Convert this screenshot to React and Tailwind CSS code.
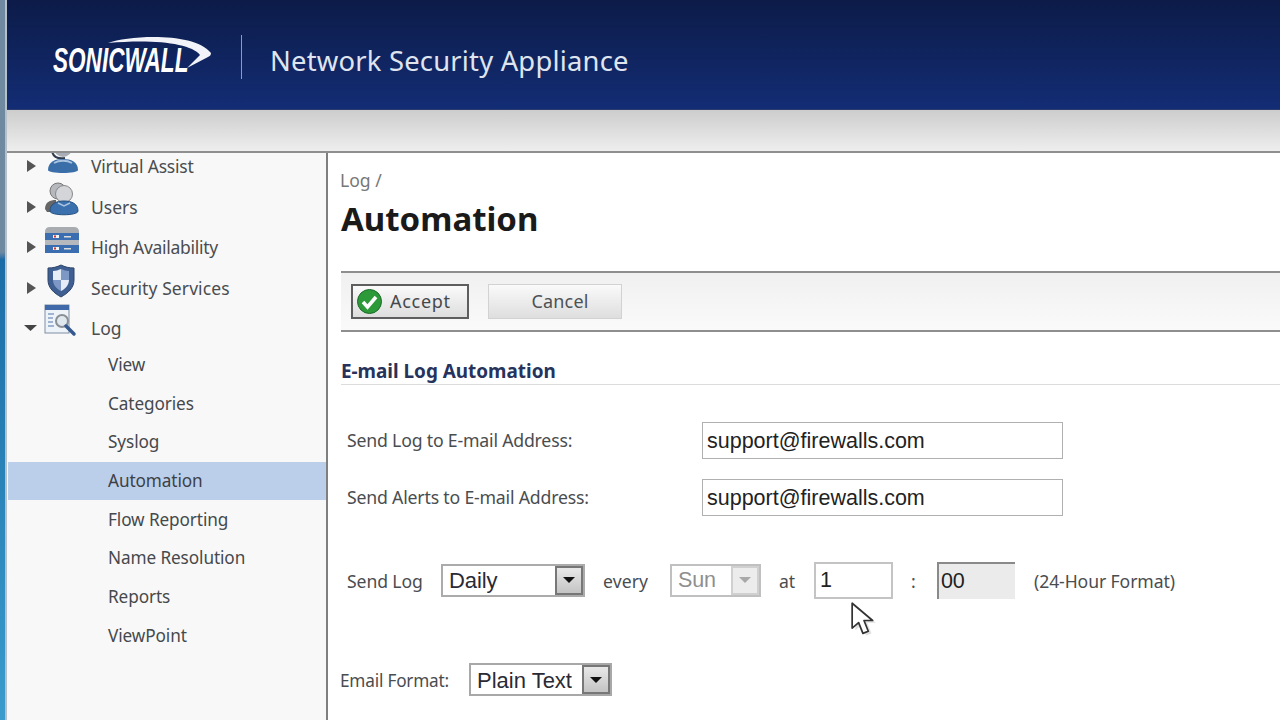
import React from "react";

const F = { fontFamily: '"Noto Sans", "DejaVu Sans", sans-serif' };
const A = { fontFamily: '"Liberation Sans", Arial, sans-serif' };

function Tri({ open }) {
  return (
    <svg width="14" height="14" viewBox="0 0 14 14" className="shrink-0">
      {open ? <path d="M0 4h13L6.5 10z" fill="#444" /> : <path d="M3 1l9 6-9 6z" fill="#555" />}
    </svg>
  );
}

function VA() {
  return (
    <svg width="36" height="32" viewBox="0 0 36 32">
      <circle cx="17" cy="5" r="9" fill="#a9aeb6" />
      <path d="M6 8c1 6 6 8 13 7" stroke="#2f3a4a" strokeWidth="2" fill="none" />
      <path d="M2 27c0-8 7-11 15-11s15 3 15 11c0 4-30 4-30 0z" fill="#3a6ea8" />
      <path d="M8 20c5-3 13-3 18 0" stroke="#a9c3e0" strokeWidth="2" fill="none" />
    </svg>
  );
}
function UsersI() {
  return (
    <svg width="36" height="36" viewBox="0 0 36 36">
      <circle cx="14" cy="9" r="8" fill="#b5b8bd" stroke="#777" />
      <path d="M1 27c0-7 5-9 11-9v12H3z" fill="#666" />
      <circle cx="20" cy="12" r="8.5" fill="#d3d5d9" stroke="#888" />
      <path d="M6 29c0-7 6-10 14-10s14 3 14 10c0 5-28 5-28 0z" fill="#3a70ad" stroke="#24507f" />
      <path d="M14 21l6 3 6-3" stroke="#a9c3e0" strokeWidth="1.5" fill="none" />
    </svg>
  );
}
function HA() {
  return (
    <svg width="36" height="28" viewBox="0 0 36 28">
      <path d="M1 6Q1 1 6 1h24q5 0 5 5v1H1z" fill="#a8abb0" />
      <rect x="1" y="7" width="34" height="7" fill="#3a6eb0" />
      <rect x="9" y="9" width="6" height="3" fill="#f4f4f4" />
      <rect x="10" y="9.5" width="2" height="2" fill="#c33" />
      <rect x="20" y="10" width="7" height="1.5" fill="#ddd" />
      <rect x="1" y="14" width="34" height="5" fill="#b5b8bc" />
      <rect x="1" y="19" width="34" height="8" fill="#3a6eb0" />
      <rect x="9" y="21" width="6" height="3" fill="#f4f4f4" />
      <rect x="10" y="21.5" width="2" height="2" fill="#c33" />
      <rect x="20" y="22" width="7" height="1.5" fill="#ddd" />
    </svg>
  );
}
function Shield() {
  return (
    <svg width="30" height="34" viewBox="0 0 30 34">
      <path d="M2 4c5 0 9-1 13-3 4 2 8 3 13 3v12c0 8-6 13-13 17C8 29 2 24 2 16z" fill="#3f5f92" stroke="#2d4569" />
      <path d="M7 7c3 0 5-1 8-2v11H7z" fill="#e6edf6" />
      <path d="M15 16h8c0 5-4 9-8 11z" fill="#e6edf6" />
      <path d="M15 5c3 1 5 2 8 2v9h-8zM7 16h8v11c-4-2-8-6-8-11z" fill="#7d98c4" />
    </svg>
  );
}
function LogI() {
  return (
    <svg width="34" height="34" viewBox="0 0 34 34">
      <rect x="1" y="1" width="24" height="28" fill="#eef3f9" stroke="#7f8ea3" />
      <rect x="1" y="1" width="24" height="5" fill="#3f69a8" />
      <path d="M4 10h6M4 14h5M4 18h5M4 22h6" stroke="#9fb4d0" strokeWidth="2" />
      <circle cx="18" cy="17" r="6" fill="#dfe7ef" stroke="#8a8f96" strokeWidth="2" />
      <path d="M22 22l8 8" stroke="#33598f" strokeWidth="3.5" strokeLinecap="round" />
    </svg>
  );
}

function TopRow({ icon, label, open, tr, ix }) {
  return (
    <div className="flex h-[40.5px] items-center pl-[16px]">
      <div className="flex w-[21px] justify-start">
        <Tri open={open} />
      </div>
      <div className={`flex w-[46px] justify-start -translate-y-[7px] ${ix}`}>{icon}</div>
      <span className={`text-[17.5px] text-[#4a4d50] ${tr}`}>{label}</span>
    </div>
  );
}

function SubRow({ label, active }) {
  return (
    <div className={`flex h-[38.7px] items-center pl-[100px] text-[17.2px] tracking-[-0.1px] ${active ? "bg-[#bccfea] text-[#3c4146]" : "text-[#45494c]"}`}>
      {label}
    </div>
  );
}

function Caret({ disabled }) {
  return (
    <div className={`flex w-[28px] items-center justify-center self-stretch border-2 ${disabled ? "border-[#d0d0d0] bg-[#ececec]" : "border-[#777] bg-gradient-to-b from-[#e8e8e8] to-[#c4c4c4]"}`}>
      <div className={`h-0 w-0 border-x-[6px] border-t-[6px] border-x-transparent ${disabled ? "border-t-[#a8a8a8]" : "border-t-[#111]"}`} />
    </div>
  );
}

function EmailRow({ label, mt }) {
  return (
    <div className={`flex items-center ${mt}`}>
      <span className="w-[361px] pl-[6px] text-[17.7px] tracking-[-0.2px] text-[#4a4d50]">{label}</span>
      <div style={A} className="flex h-[37px] w-[361px] items-center border border-[#b0b0b0] bg-white pl-[4px] pt-[2px] text-[21.5px] text-[#222]">
        support@firewalls.com
      </div>
    </div>
  );
}

export default function App() {
  return (
    <div style={F} className="relative flex h-[720px] w-[1280px] overflow-hidden bg-[#fbfbfb]">
      <div className="w-[7px] shrink-0 border-r-2 border-[#b5c0c8] bg-gradient-to-b from-[#6f8aa0] from-[35%] via-[#1b6ca6] via-[36%] to-[#3a9ccc]" />
      <div className="flex min-w-0 flex-1 flex-col">
        <header className="flex h-[110px] shrink-0 items-center border-b border-[#2a3b70] bg-gradient-to-b from-[#0c1b48] to-[#132d75] pl-[46px] pt-[11px]">
          <div className="relative h-[50px] w-[160px]">
            <svg width="160" height="50" viewBox="0 0 160 50" className="absolute left-0 top-0">
              <path d="M55 8C77 0 142 -3 158 18c0 2-1 3-3 4l-21 11 13-13C138 8 100 4 55 8z" fill="#f1f3f8" />
            </svg>
            <span style={A} className="absolute left-0 top-[3px] origin-left scale-x-[0.645] whitespace-nowrap text-[35px] font-bold italic leading-[44px] text-white">
              SONICWALL
            </span>
          </div>
          <div className="ml-[28px] h-[44px] w-px -translate-y-[3px] bg-[#8c9ac0]" />
          <span className="ml-[28px] translate-y-[1px] whitespace-nowrap text-[27.4px] tracking-[0.2px] text-[#dfe4ef]">Network Security Appliance</span>
        </header>
        <div className="h-[43px] shrink-0 border-b-2 border-[#8f8f8f] bg-gradient-to-b from-[#cdcdcd] to-[#eeeeee]" />
        <div className="flex min-h-0 flex-1">
          <aside className="w-[321px] shrink-0 overflow-hidden border-r-2 border-[#7f7f7f] bg-[#f8f8f8] pl-[1px]">
            <div className="-mb-[3px] -mt-[7px]">
              <TopRow icon={<VA />} label="Virtual Assist" tr="tracking-[-0.2px]" ix="translate-x-[1px]" />
              <TopRow icon={<UsersI />} label="Users" tr="" ix="-translate-x-[1px]" />
              <TopRow icon={<HA />} label="High Availability" tr="tracking-[-0.3px]" ix="-translate-x-[1px]" />
              <TopRow icon={<Shield />} label="Security Services" tr="tracking-[0.1px]" ix="translate-x-[1px]" />
              <TopRow icon={<LogI />} label="Log" open tr="" ix="-translate-x-[1px]" />
            </div>
            <SubRow label="View" />
            <SubRow label="Categories" />
            <SubRow label="Syslog" />
            <SubRow label="Automation" active />
            <SubRow label="Flow Reporting" />
            <SubRow label="Name Resolution" />
            <SubRow label="Reports" />
            <SubRow label="ViewPoint" />
          </aside>
          <main className="min-w-0 flex-1 bg-white pl-[13px]">
            <div className="-ml-px pt-[15px] text-[17.6px] leading-[24px] text-[#777]">Log /</div>
            <h1 className="mt-[5px] text-[33px] font-bold leading-[44px] text-[#1a1a1a]">Automation</h1>
            <div className="mt-[30px] flex h-[61px] items-center gap-[19px] border-y-2 border-[#8e8e8e] bg-gradient-to-b from-[#f0f0f0] to-[#fafafa] pl-[10px]">
              <button className="flex h-[35px] w-[118px] items-center gap-[8px] border-2 border-[#5e5e5e] bg-gradient-to-b from-[#fafafa] to-[#dedede] pl-[5px] text-[18px] tracking-[0.7px] text-[#44484c]">
                <svg width="25" height="25" viewBox="0 0 25 25" className="-ml-px">
                  <circle cx="12.5" cy="12.5" r="12" fill="#2d9a3a" stroke="#1c6b28" />
                  <path d="M6 13l4.5 5L19 8" stroke="#fff" strokeWidth="3.5" fill="none" />
                </svg>
                Accept
              </button>
              <button className="h-[35px] w-[134px] border border-[#d2d2d2] bg-gradient-to-b from-[#fafafa] to-[#dedede] pl-[10px] text-[18px] tracking-[0.2px] text-[#4d5155]">Cancel</button>
            </div>
            <div className="mt-[27px] border-b border-[#dcdcdc] text-[18.9px] font-bold leading-[25px] text-[#26335c]">E-mail Log Automation</div>
            <EmailRow label="Send Log to E-mail Address:" mt="mt-[37px]" />
            <EmailRow label="Send Alerts to E-mail Address:" mt="mt-[20px]" />
            <div className="mt-[45.5px] flex items-center pl-[6px] text-[17.6px] tracking-[-0.1px] text-[#4a4d50]">
              <span className="w-[94px] pt-[2px]">Send Log</span>
              <div style={A} className="flex h-[33px] w-[144px] items-center justify-between border-2 border-[#ababab] bg-white pl-[6px] text-[22px] text-[#2a2a35]">
                <span className="pt-[1px]">Daily</span>
                <Caret />
              </div>
              <span className="ml-[18px] w-[67px] pt-[2px] tracking-[0.1px]">every</span>
              <div style={A} className="flex h-[33px] w-[91px] items-center justify-between border-2 border-[#c0c0c0] bg-white pl-[6px] text-[21.5px] text-[#8f8f8f]">
                <span className="pt-[1px]">Sun</span>
                <Caret disabled />
              </div>
              <span className="ml-[18px] w-[35px] pt-[2px]">at</span>
              <div style={A} className="flex h-[37px] w-[79px] items-center border-2 border-[#c4c4c4] bg-white pl-[4px] pt-[1px] text-[21.5px] text-[#222]">1</div>
              <span className="ml-[18px] w-[26px] pt-[2px]">:</span>
              <div style={A} className="flex h-[37px] w-[78px] items-center border-l-2 border-t-2 border-[#8a8a8a] bg-[#ebebeb] pl-[2px] pt-[1px] text-[21.5px] text-[#222]">00</div>
              <span className="ml-[19px] pt-[2px]">(24-Hour Format)</span>
            </div>
            <div className="mt-[64.5px] flex items-center">
              <span className="-ml-px w-[129px] pt-[3px] text-[17.2px] tracking-[-0.2px] text-[#4a4d50]">Email Format:</span>
              <div style={A} className="flex h-[33px] w-[143px] items-center justify-between whitespace-nowrap border-2 border-[#a8a8a8] bg-white pl-[6px] text-[22px] text-[#2a2a35]">
                <span className="pt-[1px]">Plain Text</span>
                <Caret />
              </div>
            </div>
          </main>
        </div>
      </div>
      <svg width="28" height="39" viewBox="0 0 26 36" className="absolute left-[850px] top-[601px]">
        <path d="M3 2l0 23 6-5 4 10 5-2-4-10h8z" fill="#c8c8c8" opacity=".55" transform="translate(2 2)" />
        <path d="M2 2l0 23 6-5 4 10 5-2-4-10h8z" fill="#fff" stroke="#333" strokeWidth="1.6" strokeLinejoin="round" />
      </svg>
    </div>
  );
}
